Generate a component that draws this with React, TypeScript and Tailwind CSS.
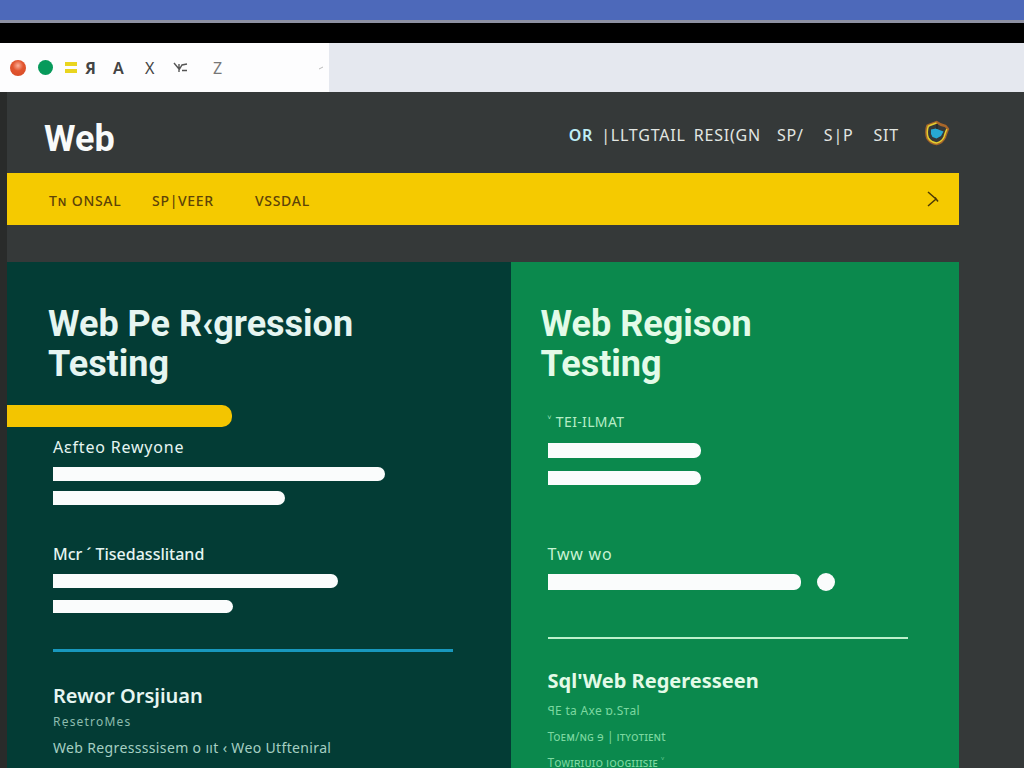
import type { ReactNode } from 'react';

const tabMarks = [
  { label: 'Я', className: 'w-7 font-bold' },
  { label: 'A', className: 'w-8 font-semibold' },
  { label: 'X', className: 'w-7' },
];

const navLinks = [
  { label: '|LLTGTAIL', className: 'ml-2' },
  { label: 'RESI(GN', className: 'ml-2' },
  { label: 'SP/', className: 'ml-4' },
  { label: 'S|P', className: 'ml-5' },
  { label: 'SIT', className: 'ml-5' },
];

const sections = [
  { label: 'Tɴ ONSAL', className: 'w-[103px]' },
  { label: 'SP|VEER', className: 'w-[103px]' },
  { label: 'VSSDAL', className: '' },
];

function BrowserChrome() {
  return (
    <div>
      <div className="h-5 bg-[#4d69ba]" />
      <div className="h-[3px] bg-[#8e91a3]" />
      <div className="h-5 bg-black" />
      <div className="flex h-[49px] bg-[#e5e8ef]">
        <div className="flex w-[329px] items-center bg-[#fdfdfe] pr-1 pl-[10px] text-base text-[#444]">
          <span className="mr-3 h-4 w-4 rounded-full bg-[radial-gradient(circle_at_50%_35%,#fbb09a_0%,#e2552f_40%,#d44a25_100%)]" />
          <span className="mr-3 h-[15px] w-[15px] rounded-full bg-[#079a5b]" />
          <span className="mr-2 flex w-3 flex-col gap-[3px]">
            <span className="h-1 bg-[#e9d51f]" />
            <span className="h-1 bg-[#e9d51f]" />
          </span>
          {tabMarks.map((mark) => (
            <span key={mark.label} className={mark.className}>
              {mark.label}
            </span>
          ))}
          <svg className="mr-6 h-4 w-4" viewBox="0 0 16 16" fill="none" stroke="#555" strokeWidth="1.4">
            <path d="M1 3l5 6M6 4v8M6 10l3-5 5-1M9 10.500h5" />
          </svg>
          <span className="text-[#777]">Z</span>
          <svg className="ml-auto h-2 w-2" viewBox="0 0 8 8" fill="none" stroke="#bbb">
            <path d="M2 5l4-2" />
          </svg>
        </div>
      </div>
    </div>
  );
}

function ShieldIcon() {
  return (
    <svg className="h-7 w-7" viewBox="0 0 28 28" fill="none">
      <path
        d="M13.500 3C10.500 4.500 7 5.200 4.500 6.500 3 10 3 16 4.500 19.500c1.700 3 5 5 9 5.500 3.500-.8 7-3.500 8.500-7 .8-2.500 1.500-5 3-8L22.500 7c-3-.5-6-1.500-9-4z"
        stroke="#a8662a"
        strokeWidth="2.500"
        strokeLinejoin="round"
      />
      <path
        d="M13.500 4C10.500 5.200 8 6 5.300 7.200 4 11 4 15.500 5.300 19c1.700 2.600 4.700 4.500 8.200 5 3.300-.8 6.300-3 7.600-6.300.8-2.200 1.400-5 2.800-7.500"
        stroke="#e2cd2e"
        strokeWidth="1.500"
      />
      <path d="M8 10.500l5-1 3.500 1.500 4 1.500-2.500 4.500-4.500 2.500-4-1.500L8 15z" fill="#27a9d3" />
      <path d="M14 5v5" stroke="#272b2b" strokeWidth="1.500" />
    </svg>
  );
}

function Bar({ className }: { className: string }) {
  return <div className={`max-w-full rounded-r-[7px] bg-[#fafcfc] ${className}`} />;
}

function PanelTitle({ children }: { children: ReactNode }) {
  return <h2 className="font-['Roboto','Noto_Sans',sans-serif] text-4xl leading-10 font-bold">{children}</h2>;
}

export default function App() {
  return (
    <div className="h-screen overflow-hidden bg-[#353939] font-['Noto_Sans','Open_Sans',sans-serif] text-white">
      <BrowserChrome />
      <div className="flex h-full">
        <div className="w-[7px] bg-[#292b2a]" />
        <div className="mr-[65px] flex flex-1 flex-col">
          <header className="flex h-[81px] items-center justify-between pr-2 pl-[37px]">
            <h1 className="pt-3 font-['Roboto','Noto_Sans',sans-serif] text-4xl leading-10 font-bold text-[#f8fafa]">Web</h1>
            <nav className="flex items-center text-base tracking-wider text-[#e2e6e2]">
              <div className="flex items-center pt-1">
                <a href="#or" className="font-semibold text-[#bdeef7]">
                  OR
                </a>
                {navLinks.map((link) => (
                  <a key={link.label} href="#nav" className={link.className}>
                    {link.label}
                  </a>
                ))}
              </div>
              <a href="#account" aria-label="Account" className="ml-6">
                <ShieldIcon />
              </a>
            </nav>
          </header>

          <nav className="flex h-[52px] items-center bg-[#f5ca00] pr-4 pl-[42px] text-sm tracking-wider text-[#5d4308]">
            <div className="flex items-center pt-1 font-medium">
              {sections.map((section) => (
                <a key={section.label} href="#section" className={section.className}>
                  {section.label}
                </a>
              ))}
            </div>
            <button type="button" aria-label="Next" className="ml-auto">
              <svg className="h-5 w-5" viewBox="0 0 20 20" fill="none" stroke="#4c3905" strokeWidth="1.500">
                <path d="M5 3l8 7-8 7M12 8.500l3 4" />
              </svg>
            </button>
          </nav>

          <main className="mt-[37px] flex flex-1">
            <section className="flex-[503] bg-[#033c35] pt-[42px] text-[#e6f5f1]">
              <div className="pl-[41px]">
                <PanelTitle>
                  Web Pe R‹gression
                  <br />
                  Testing
                </PanelTitle>
              </div>
              <div className="mt-[21px] h-[22px] w-[225px] rounded-r-[10px] bg-[#f3c500]" />
              <div className="pr-[58px] pl-[46px]">
                <h3 className="mt-[10px] text-base leading-5 tracking-wider">Aɛfteo Rewyone</h3>
                <Bar className="mt-[10px] h-[14px] w-[332px]" />
                <Bar className="mt-[10px] h-[14px] w-[232px]" />
                <h3 className="mt-[39px] text-base leading-5 font-medium">Mcr ˊ Tisedasslitand</h3>
                <Bar className="mt-[10px] h-[14px] w-[285px]" />
                <Bar className="mt-3 h-[13px] w-[180px]" />
                <hr className="mt-9 border-t-[3px] border-[#1898bd]" />
                <h3 className="mt-8 text-xl leading-6 font-semibold">Rewor Orsjiuan</h3>
                <p className="mt-1 text-xs leading-5 tracking-widest text-[#8dbdaf]">RẹsetroMes</p>
                <p className="mt-[6px] text-sm leading-5 tracking-wide text-[#a5cfc2]">
                  Web Regressssisem o ııt ‹ Weo Utfteniral
                </p>
              </div>
            </section>

            <section className="flex-[448] bg-[#0b894d] pt-[42px] text-[#e3fbe8]">
              <div className="pl-[30px]">
                <PanelTitle>
                  Web Regison
                  <br />
                  Testing
                </PanelTitle>
              </div>
              <div className="pr-[51px] pl-[37px]">
                <h3 className="mt-7 text-sm leading-5 tracking-wide text-[#b6edc6]">˅ TEI-ILMAT</h3>
                <Bar className="mt-[11px] h-[15px] w-[153px]" />
                <Bar className="mt-[13px] h-[14px] w-[153px]" />
                <h3 className="mt-[59px] text-base leading-5 tracking-wider text-[#c8f3d3]">Tww wo</h3>
                <div className="mt-[9px] flex items-center gap-4">
                  <Bar className="h-4 w-[253px]" />
                  <span className="h-[18px] w-[18px] rounded-full bg-[#fafcfc]" />
                </div>
                <hr className="mt-[46px] border-t-2 border-[#bdf0cb]" />
                <h3 className="mt-[30px] text-xl leading-6 font-bold">Sql'Web Regeresseen</h3>
                <ul className="mt-2 flex flex-col gap-[6px] text-xs leading-5 text-[#7cd8a0]">
                  <li className="tracking-wide">ꟼE ta Axe ɒ.Sтal</li>
                  <li>Toᴇᴍ/ɴɢ ɘ | ıᴛʏᴏᴛɪᴇɴt</li>
                  <li>Тoᴡɪʀɪᴜɪᴏ ıᴏᴏɢɪɪɪѕɪᴇ ˅</li>
                </ul>
              </div>
            </section>
          </main>
        </div>
      </div>
    </div>
  );
}
